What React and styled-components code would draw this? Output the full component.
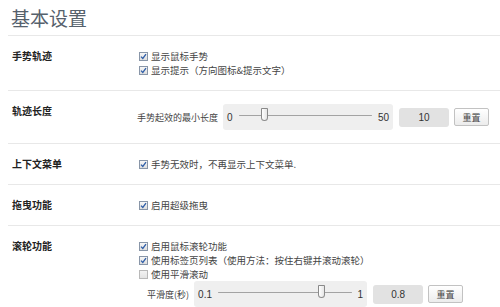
import React from 'react';
import styled, { createGlobalStyle } from 'styled-components';

const GlobalStyle = createGlobalStyle`
  html, body {
    margin: 0;
    padding: 0;
    background: #fff;
  }
  body {
    font-family: "Noto Sans CJK SC", "Liberation Sans", sans-serif;
    overflow: hidden;
  }
`;

const Page = styled.div`
  width: 500px;
  height: 307px;
  padding-left: 8px;
  box-sizing: border-box;
  overflow: hidden;
`;

const Title = styled.h1`
  margin: 0;
  padding: 6px 0 5px 3px;
  height: 24px;
  font-size: 19px;
  line-height: 24px;
  font-weight: 400;
  color: #56616c;
`;

const Section = styled.div`
  display: grid;
  grid-template-columns: 129px 1fr;
  padding: 13px 0;
  border-top: 1px solid #e8e8e8;
`;

const Label = styled.div`
  padding-left: 4px;
  font-size: 10px;
  line-height: 14px;
  font-weight: 700;
  color: #222;
`;

const Options = styled.div`
  display: flex;
  flex-direction: column;
`;

const Option = styled.label`
  display: flex;
  align-items: center;
  gap: 3px;
  height: 14px;
  padding-left: 2px;
  font-size: 9.5px;
  color: #444;
  white-space: nowrap;
`;

const Box = styled.span`
  display: inline-flex;
  align-items: center;
  justify-content: center;
  width: 9px;
  height: 9px;
  box-sizing: border-box;
  border: 1px solid ${p => (p.$on ? '#8996a8' : '#b9b9b9')};
  background: ${p => (p.$on ? 'linear-gradient(#f7f7f7, #dedede)' : 'linear-gradient(#f3f3f3, #e4e4e4)')};
`;

const SliderRow = styled.div`
  display: flex;
  align-items: center;
  height: 26px;
  padding-left: ${p => p.$indent || 0}px;
  font-size: 9px;
  color: #444;
  white-space: nowrap;
`;

const RowLabel = styled.span`
  margin-right: 5px;
`;

const SliderBox = styled.div`
  display: flex;
  align-items: center;
  gap: 6px;
  width: ${p => p.$width}px;
  height: 26px;
  padding: 0 4px;
  box-sizing: border-box;
  background: #efefef;
  border-radius: 3px;
  font-family: "Liberation Sans", sans-serif;
  font-size: 10px;
  color: #333;
`;

const Track = styled.div`
  position: relative;
  flex: 1;
  height: 1px;
  margin-top: -3px;
  background: #a3a3a3;
  border-radius: 1px;
`;

const Thumb = styled.div`
  position: absolute;
  top: -7px;
  width: 7px;
  height: 13px;
  margin-left: -4px;
  box-sizing: border-box;
  border: 1px solid #8a8a8a;
  border-radius: 1px 1px 4px 4px;
  background: linear-gradient(90deg, #fff, #e6e6e6);
`;

const Value = styled.div`
  display: flex;
  align-items: center;
  justify-content: center;
  width: 50px;
  height: 19px;
  margin-left: 6px;
  background: #e2e2e2;
  border-radius: 3px;
  font-family: "Liberation Sans", sans-serif;
  font-size: 10px;
  color: #333;
`;

const Reset = styled.button`
  width: 35px;
  height: 18px;
  margin-left: 5px;
  padding: 0;
  border: 1px solid #c2c2c2;
  border-radius: 2px;
  background: linear-gradient(#ffffff, #ececec);
  font-family: "Noto Sans CJK SC", sans-serif;
  font-size: 9px;
  color: #444;
`;

function Check({ on }) {
  return (
    <Box $on={on}>
      {on && (
        <svg width="7" height="7" viewBox="0 0 7 7">
          <path d="M1 3.6 L2.8 5.4 L6 1.2" fill="none" stroke="#2f5ea8" strokeWidth="1.3" />
        </svg>
      )}
    </Box>
  );
}

function Slider({ label, min, max, value, width, indent }) {
  const pct = ((value - min) / (max - min)) * 100;
  return (
    <SliderRow $indent={indent}>
      <RowLabel>{label}</RowLabel>
      <SliderBox $width={width}>
        <span>{min}</span>
        <Track>
          <Thumb style={{ left: pct + '%' }} />
        </Track>
        <span>{max}</span>
      </SliderBox>
      <Value>{value}</Value>
      <Reset>重置</Reset>
    </SliderRow>
  );
}

export default function App() {
  return (
    <Page>
      <GlobalStyle />
      <Title>基本设置</Title>

      <Section>
        <Label>手势轨迹</Label>
        <Options>
          <Option><Check on />显示鼠标手势</Option>
          <Option><Check on />显示提示（方向图标&提示文字）</Option>
        </Options>
      </Section>

      <Section>
        <Label>轨迹长度</Label>
        <Options>
          <Slider label="手势起效的最小长度" min={0} max={50} value={10} width={170} />
        </Options>
      </Section>

      <Section>
        <Label>上下文菜单</Label>
        <Options>
          <Option><Check on />手势无效时，不再显示上下文菜单.</Option>
        </Options>
      </Section>

      <Section>
        <Label>拖曳功能</Label>
        <Options>
          <Option><Check on />启用超级拖曳</Option>
        </Options>
      </Section>

      <Section>
        <Label>滚轮功能</Label>
        <Options>
          <Option><Check on />启用鼠标滚轮功能</Option>
          <Option><Check on />使用标签页列表（使用方法：按住右键并滚动滚轮）</Option>
          <Option><Check />使用平滑滚动</Option>
          <Slider label="平滑度(秒)" min={0.1} max={1} value={0.8} width={173} indent={10} />
        </Options>
      </Section>
    </Page>
  );
}
